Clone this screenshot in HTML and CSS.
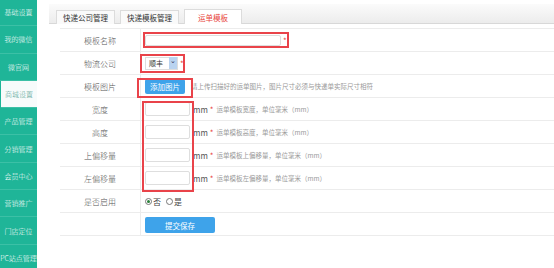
FILE: index.html
```html
<!DOCTYPE html>
<html lang="zh-CN">
<head>
    <meta charset="UTF-8">
    <title>运单模板</title>
    <link rel="stylesheet" href="styles.css">
</head>
<body>
    <div class="sidebar">
        <div class="nav-item">基础设置</div>
        <div class="nav-item">我的微信</div>
        <div class="nav-item">微官网</div>
        <div class="nav-item active">商城设置</div>
        <div class="nav-item">产品管理</div>
        <div class="nav-item">分销管理</div>
        <div class="nav-item">会员中心</div>
        <div class="nav-item">营销推广</div>
        <div class="nav-item">门店定位</div>
        <div class="nav-item">PC站点管理</div>
    </div>

    <div class="main">
        <div class="tabs">
            <div class="tab">快递公司管理</div>
            <div class="tab">快递模板管理</div>
            <div class="tab current">运单模板</div>
        </div>

        <div class="form">
            <div class="row">
                <div class="label">模板名称</div>
                <div class="field"><input class="text long" type="text"><span class="star">*</span></div>
            </div>
            <div class="row">
                <div class="label">物流公司</div>
                <div class="field">
                    <span class="select">顺丰<span class="arrow">&#8964;</span></span><span class="star">*</span>
                </div>
            </div>
            <div class="row">
                <div class="label">模板图片</div>
                <div class="field">
                    <button class="btn small">添加图片</button>
                    <span class="hint">请上传扫描好的运单图片，图片尺寸必须与快递单实际尺寸相符</span>
                </div>
            </div>
            <div class="row">
                <div class="label">宽度</div>
                <div class="field"><input class="text short" type="text"><span class="unit">mm</span><span class="star">*</span><span class="hint">运单模板宽度，单位毫米（mm）</span></div>
            </div>
            <div class="row">
                <div class="label">高度</div>
                <div class="field"><input class="text short" type="text"><span class="unit">mm</span><span class="star">*</span><span class="hint">运单模板高度，单位毫米（mm）</span></div>
            </div>
            <div class="row">
                <div class="label">上偏移量</div>
                <div class="field"><input class="text short" type="text"><span class="unit">mm</span><span class="star">*</span><span class="hint">运单模板上偏移量，单位毫米（mm）</span></div>
            </div>
            <div class="row">
                <div class="label">左偏移量</div>
                <div class="field"><input class="text short" type="text"><span class="unit">mm</span><span class="star">*</span><span class="hint">运单模板左偏移量，单位毫米（mm）</span></div>
            </div>
            <div class="row">
                <div class="label">是否启用</div>
                <div class="field radios">
                    <label><span class="radio checked"></span>否</label>
                    <label><span class="radio"></span>是</label>
                </div>
            </div>
            <div class="row">
                <div class="label"></div>
                <div class="field"><button class="btn submit">提交保存</button></div>
            </div>

            <!-- red annotation boxes -->
            <div class="mark mark-name"></div>
            <div class="mark mark-select"></div>
            <div class="mark mark-image"></div>
            <div class="mark mark-size"></div>
        </div>
    </div>
</body>
</html>
```

FILE: styles.css
```css
* {
    box-sizing: border-box;
    margin: 0;
    padding: 0;
}

body {
    display: flex;
    width: 554px;
    height: 268px;
    overflow: hidden;
    background: #fff;
    font-family: "Noto Sans CJK SC", "Liberation Sans", sans-serif;
    font-size: 8px;
    color: #555;
}

/* Sidebar */
.sidebar {
    width: 37px;
    flex-shrink: 0;
    background: #1fb598;
    margin-top: -1px;
}

.nav-item {
    height: 27.3px;
    display: flex;
    align-items: center;
    justify-content: center;
    color: #fff;
    font-size: 7px;
    font-weight: 300;
    white-space: nowrap;
    overflow: hidden;
    border-bottom: 1px solid #3cc0a6;
}

.nav-item.active {
    background: #f7fbfb;
    color: #4f9e90;
    margin-left: 1px;
}

/* Main area */
.main {
    flex: 1;
    display: flex;
    flex-direction: column;
}

.tabs {
    margin: 4px 0 0 12px;
    height: 20px;
    display: flex;
    align-items: flex-end;
    gap: 5px;
    padding-left: 7px;
    background: linear-gradient(to bottom, #fbfbfb, #ececec);
    border-bottom: 1px solid #d8d8d8;
}

.tab {
    width: 59px;
    height: 14px;
    display: flex;
    align-items: center;
    justify-content: center;
    background: #fafafa;
    border: 1px solid #dcdcdc;
    border-bottom: none;
    color: #333;
    font-size: 7.5px;
    margin-bottom: -1px;
}

.tab.current {
    background: #fff;
    color: #e8453c;
    width: 58px;
    height: 15px;
}

/* Form */
.form {
    position: relative;
    margin: 4px 0 0 23px;
    border-top: 1px solid #ececec;
}

.row {
    display: flex;
    height: 23px;
    border-bottom: 1px solid #ececec;
}

.label {
    width: 81px;
    flex-shrink: 0;
    display: flex;
    align-items: center;
    justify-content: center;
    border-right: 1px solid #ececec;
    color: #555;
    font-weight: 300;
}

.field {
    flex: 1;
    display: flex;
    align-items: center;
    padding-left: 4px;
    white-space: nowrap;
}

.text {
    border: 1px solid #dedede;
    border-radius: 2px;
    background: #fff;
}

.text.long {
    width: 136px;
    height: 11px;
}

.text.short {
    width: 45px;
    height: 14px;
}

.star {
    color: #e8453c;
    margin: 0 3px 0 2px;
}

.unit {
    color: #555;
    margin-left: 3px;
    font-size: 8px;
}

.hint {
    color: #999;
    font-size: 6.5px;
}

.select {
    display: flex;
    align-items: center;
    width: 33px;
    height: 13px;
    padding-left: 3px;
    border: 1px solid #ddd;
    background: #fff;
    font-size: 7px;
    color: #333;
    justify-content: space-between;
}

.arrow {
    width: 8px;
    height: 12px;
    background: #b9d3f0;
    color: #335;
    font-size: 7px;
    line-height: 6px;
    text-align: center;
}

.btn {
    border: none;
    border-radius: 2px;
    background: #3ea3ea;
    color: #fff;
    font-family: inherit;
    font-size: 7.5px;
}

.btn.small {
    width: 40px;
    height: 15px;
    margin-right: 6px;
}

.btn.submit {
    width: 70px;
    height: 16px;
    margin-top: 2px;
}

.radios {
    gap: 5px;
}

.radios label {
    display: flex;
    align-items: center;
    color: #444;
}

.radio {
    width: 7px;
    height: 7px;
    border: 1px solid #777;
    border-radius: 50%;
    margin-right: 1px;
    display: flex;
    align-items: center;
    justify-content: center;
}

.radio.checked::after {
    content: "";
    width: 3px;
    height: 3px;
    border-radius: 50%;
    background: #2a7f3a;
}

/* Annotation frames drawn over the form */
.mark {
    position: absolute;
    border: 2px solid #e9434a;
}

.mark-name {
    left: 83px;
    top: 3px;
    width: 146px;
    height: 16px;
}

.mark-select {
    left: 80px;
    top: 25px;
    width: 45px;
    height: 19px;
}

.mark-image {
    left: 77px;
    top: 49px;
    width: 56px;
    height: 20px;
}

.mark-size {
    left: 82px;
    top: 72px;
    width: 52px;
    height: 91px;
}
```
